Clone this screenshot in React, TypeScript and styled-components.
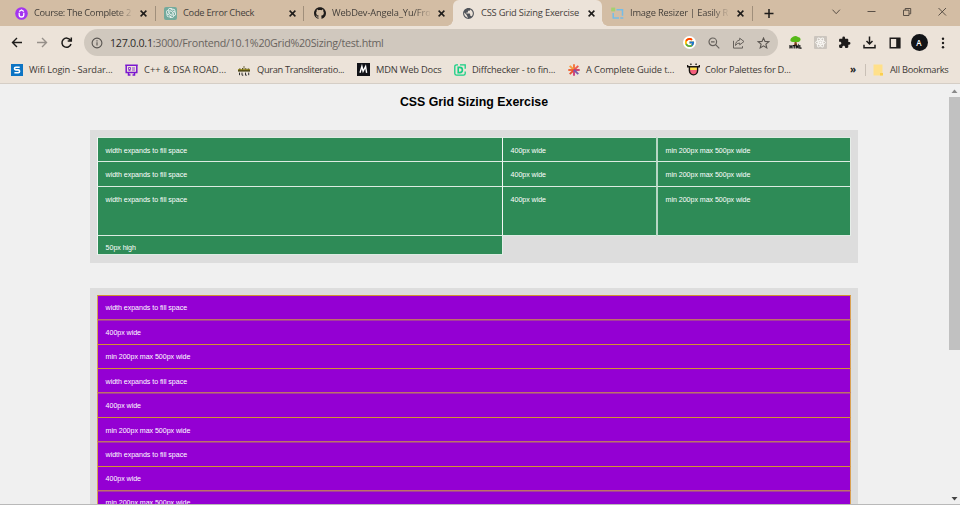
import React from "react";
import styled, { createGlobalStyle } from "styled-components";
import { SiOpenai, SiGithub } from "react-icons/si";
import { FcGoogle } from "react-icons/fc";
import { MdPublic, MdExtension } from "react-icons/md";

const Global = createGlobalStyle`
  * { box-sizing: border-box; }
  html, body { margin: 0; overflow: hidden; }
  body { font-family: "Open Sans", "Noto Sans", sans-serif; }
  svg { display: block; flex: none; }
`;

const Window = styled.div`
  width: 960px;
  height: 505px;
  display: flex;
  flex-direction: column;
  background: #f0f0f0;
  overflow: hidden;
`;

const TabStrip = styled.div`
  height: 26px;
  flex: none;
  display: flex;
  background: #d3bda4;
`;

const Tab = styled.div<{ $w: number; $active?: boolean; $pad: number }>`
  position: relative;
  width: ${(p) => p.$w}px;
  height: 26px;
  flex: none;
  display: flex;
  align-items: center;
  padding-left: ${(p) => p.$pad}px;
  background: ${(p) => (p.$active ? "#ece3d9" : "transparent")};
  border-radius: 6px 6px 0 0;
  &::before,
  &::after {
    content: "";
    display: ${(p) => (p.$active ? "block" : "none")};
    position: absolute;
    bottom: 0;
    width: 6px;
    height: 6px;
  }
  &::before {
    left: -6px;
    background: radial-gradient(circle at 0 0, transparent 5.5px, #ece3d9 6px);
  }
  &::after {
    right: -6px;
    background: radial-gradient(circle at 100% 0, transparent 5.5px, #ece3d9 6px);
  }
`;

const TabTitle = styled.div<{ $ls?: number; $fade?: boolean }>`
  width: 98px;
  margin-left: 6px;
  flex: none;
  font-size: 9.3px;
  line-height: 14px;
  letter-spacing: ${(p) => p.$ls ?? -0.15}px;
  color: #45403b;
  white-space: nowrap;
  mask-image: ${(p) => (p.$fade ? "linear-gradient(90deg, #000 84%, transparent 102%)" : "none")};
`;

const CloseSlot = styled.div<{ $ml: number }>`
  margin-left: ${(p) => p.$ml}px;
`;

const Divider = styled.div<{ $h: number; $ml?: number; $color?: string }>`
  width: 1px;
  height: ${(p) => p.$h}px;
  margin-left: ${(p) => p.$ml ?? 0}px;
  flex: none;
  background: ${(p) => p.$color ?? "#a08f7b"};
`;

const StripControls = styled.div`
  flex: 1;
  display: flex;
  align-items: center;
  padding-left: 11px;
`;

const Toolbar = styled.div`
  height: 32px;
  flex: none;
  display: flex;
  align-items: center;
  padding: 1px 0 0 10px;
  background: #ece3d9;
`;

const Address = styled.div`
  width: 694px;
  height: 27px;
  margin-left: 10px;
  flex: none;
  display: flex;
  align-items: center;
  padding-left: 7px;
  border-radius: 14px;
  background: #d0c8be;
`;

const Url = styled.div`
  width: 573px;
  margin-left: 7px;
  flex: none;
  font-size: 10.7px;
  line-height: 16px;
  letter-spacing: -0.26px;
  color: #69645f;
  white-space: nowrap;
  b {
    font-weight: 400;
    color: #2c2a28;
  }
`;

const AddressIcons = styled.div`
  display: flex;
  align-items: center;
  gap: 12px;
`;

const GoogleBadge = styled.div`
  width: 13px;
  height: 13px;
  display: grid;
  place-items: center;
  border-radius: 50%;
  background: #fff;
`;

const Actions = styled.div`
  display: flex;
  align-items: center;
  margin-left: 11px;
`;

const ActionSlot = styled.div<{ $w: number }>`
  width: ${(p) => p.$w}px;
  display: flex;
  justify-content: center;
  flex: none;
`;

const Avatar = styled.div`
  width: 17px;
  height: 17px;
  border-radius: 50%;
  background: #121417;
  color: #fff;
  font: 600 8px/17px "Open Sans", sans-serif;
  text-align: center;
`;

const Bookmarks = styled.div`
  height: 26px;
  flex: none;
  display: flex;
  align-items: center;
  padding: 0 0 2px 11px;
  background: #ece3d9;
  border-bottom: 1px solid #d5cec6;
`;

const Bookmark = styled.div<{ $w: number; $ls?: number; $gap?: number }>`
  width: ${(p) => p.$w}px;
  flex: none;
  display: flex;
  align-items: center;
  gap: ${(p) => p.$gap ?? 6}px;
  font-size: 9.3px;
  line-height: 14px;
  letter-spacing: ${(p) => p.$ls ?? -0.12}px;
  color: #3d3935;
  white-space: nowrap;
`;

const More = styled.div`
  width: 15px;
  margin-left: 24px;
  flex: none;
  font: 700 10px/12px "Open Sans", sans-serif;
  color: #222;
  padding-bottom: 2px;
`;

const Viewport = styled.div`
  flex: 1;
  min-height: 0;
  display: flex;
  border-bottom: 1px solid #b9b9b9;
`;

const Page = styled.main`
  flex: 1;
  padding: 0 90px;
  overflow: hidden;
  font-family: "Liberation Sans", Arial, sans-serif;
`;

const Heading = styled.h1`
  margin: 0;
  height: 46px;
  padding-top: 10px;
  font-size: 12.35px;
  line-height: 17px;
  font-weight: 700;
  text-align: center;
  color: #000;
`;

const Panel = styled.section<{ $h: number; $mb: number }>`
  height: ${(p) => p.$h}px;
  margin-bottom: ${(p) => p.$mb}px;
  padding: 7px;
  background: #dddddd;
`;

const GreenGrid = styled.div`
  display: grid;
  grid-template-columns: 405px 154px 195px;
  grid-template-rows: 24px 25px 49px 20px;
`;

const PurpleGrid = styled.div`
  display: grid;
  grid-template-columns: 754px;
  grid-template-rows: 24px 25px 24px 24px 25px 24px 25px 24px 25px;
`;

const Cell = styled.div`
  padding: 8px 0 0 7.6px;
  font-size: 7.1px;
  line-height: 9px;
  letter-spacing: -0.05px;
  color: #fff;
  white-space: nowrap;
  overflow: hidden;
`;

const GreenCell = styled(Cell)<{ $wideEdge?: boolean; $end?: boolean; $bottom?: boolean; $last?: boolean }>`
  background: #2e8b57;
  border-top: 1px solid #dcece2;
  border-left: ${(p) => (p.$wideEdge ? "2px solid #b6d6c4" : "1px solid #f4f8f5")};
  border-right: ${(p) => (p.$end ? "1px solid #e6eee9" : "none")};
  border-bottom: ${(p) => (p.$bottom ? "1px solid #dcece2" : "none")};
  margin-bottom: ${(p) => (p.$bottom && !p.$last ? -1 : 0)}px;
  margin-right: ${(p) => (p.$last ? -1 : 0)}px;
  padding-top: ${(p) => (p.$last ? 8 : 9)}px;
`;

const PurpleCell = styled(Cell)<{ $soft?: boolean; $low?: boolean }>`
  background: #9400d3;
  border: solid #d9a052;
  border-width: 1px 1px 0 1px;
  border-top-color: ${(p) => (p.$soft ? "#c07068" : "#d3922f")};
  box-shadow: ${(p) => (p.$soft ? "inset 0 1px 0 #a43e9c" : "none")};
  padding-top: ${(p) => (p.$low ? 9 : 8)}px;
`;

const Scrollbar = styled.div`
  width: 12px;
  flex: none;
  display: flex;
  flex-direction: column;
  align-items: center;
  justify-content: space-between;
  padding: 5px 0 3px;
  background: #f0f0f0;
`;

const Thumb = styled.div`
  width: 11px;
  height: 253px;
  margin: 4px 0 auto 1px;
  background: #c1c1c1;
`;

const Close = () => (
  <svg width="7" height="7" viewBox="0 0 7 7" fill="none" stroke="#1e1c1a" strokeWidth="1.5">
    <path d="M.6.6 6.4 6.4M6.4.6.6 6.4" />
  </svg>
);

const UdemyIcon = () => (
  <svg width="13" height="13" viewBox="0 0 13 13">
    <circle cx="6.5" cy="6.5" r="6.3" fill="#a435f0" />
    <path d="M4.2 5.800v2a2.300 2.200 0 0 0 4.600 0v-2M4.100 4.500 6.500 3l2.400 1.500" fill="none" stroke="#fff" strokeWidth="1.300" />
  </svg>
);

const GptBox = styled.div`
  width: 13px;
  height: 13px;
  display: grid;
  place-items: center;
  border-radius: 2px;
  background: #74aa9c;
  color: #fff;
`;

const ResizerIcon = () => (
  <svg width="13" height="13" viewBox="0 0 13 13" fill="none">
    <path d="M5.500 2.800h6v6M2.200 6v5h5.800" stroke="#74bde8" strokeWidth="1.500" />
    <path d="M9.300 11h3" stroke="#74bde8" strokeWidth="1.500" />
    <path d="M.2.600h4v3.800h-4z" fill="#a5d06f" />
  </svg>
);

const SIcon = () => (
  <svg width="12" height="12" viewBox="0 0 12 12">
    <path d="M0 0h12v12H0z" fill="#0c74c4" />
    <path d="M8.700 3.200H4.800q-1.300 0-1.300 1.300T4.800 5.900h2.400q1.400 0 1.400 1.400T7.200 8.800H3.400" fill="none" stroke="#fff" strokeWidth="1.600" />
  </svg>
);

const BoardIcon = () => (
  <svg width="13" height="12" viewBox="0 0 13 12" fill="none" stroke="#7a17cf" strokeWidth="1.500">
    <path d="M1.200 1.200h10.600v7.300H1.200zM.2 1.200h12.600M3.500 8.500v2.600h2M9.500 8.500v2.600h-2" />
    <path d="M3.500 3.500h2v2h-2zM7 4h3M7 6h3M3.500 6.500h2" strokeWidth=".8" />
  </svg>
);

const QuranIcon = () => (
  <svg width="12" height="12" viewBox="0 0 12 12">
    <path d="M0 5h12v2.200H0z" fill="#a39430" />
    <path d="M1 4.500h1.600v1H1zM4 4h1v1.500H4zM5.600 2h.8v3h-.8zM7.300 4h1v1.500h-1zM9.600 4.500h1.600v1H9.600z" fill="#57511d" />
    <path d="M0 6.900h12" stroke="#35320f" strokeWidth="1.200" />
    <path d="M1.500 8.600v2.600M4 8.600v2.600h1.300M7.500 8.600v2.600h1.300M10.700 8.600v2.600" stroke="#333" strokeWidth="1" fill="none" />
  </svg>
);

const MdnIcon = () => (
  <svg width="13" height="13" viewBox="0 0 13 13">
    <path d="M0 0h13v13H0z" fill="#111217" />
    <path d="M3 9.800 4.900 3.400l1.200 4.800 2.500-4.800 1 6.400" fill="none" stroke="#fff" strokeWidth="1.400" />
  </svg>
);

const DiffIcon = () => (
  <svg width="12" height="12" viewBox="0 0 12 12" fill="none" stroke="#16cf84">
    <path d="M4 .8H2.600Q.8.8.8 2.600v6.800q0 1.800 1.800 1.800h6.800q1.800 0 1.800-1.800V7.600M6 .8h5.200v4" strokeWidth="1.300" />
    <path d="M4.200 3.400h1.600a2.600 2.600 0 0 1 0 5.200H4.200z" strokeWidth="1.600" />
  </svg>
);

const StarburstIcon = () => (
  <svg width="12" height="12" viewBox="0 0 12 12" strokeWidth="1.900" fill="none">
    <path d="M6 6V.3" stroke="#f4743c" />
    <path d="M6 6 1.700 1.900" stroke="#f59b40" />
    <path d="M6 6 10.300 1.900" stroke="#ef5b4c" />
    <path d="M.3 6H6" stroke="#f0622f" />
    <path d="M6 6 1.700 10.100" stroke="#e9522f" />
    <path d="M6 6h5.700" stroke="#cf3f6b" />
    <path d="M6 6v5.700" stroke="#cf3f7b" />
    <path d="m6 6 4.300 4.100" stroke="#7a5cab" />
  </svg>
);

const PaletteBugIcon = () => (
  <svg width="13" height="13" viewBox="0 0 13 13">
    <path d="M2.600 3.400h7.800v4.200a3.900 4.200 0 0 1-7.800 0z" fill="#ffe04d" />
    <path d="M2.600 7h7.800v.8a3.900 3.900 0 0 1-7.800 0z" fill="#f4607c" />
    <path d="M.6 2v1.800h11.800V2M2.400 3.800v3.800a4.100 4.300 0 0 0 8.200 0V3.800M3.500.6l.8 1.200M9.500.6l-.8 1.200" fill="none" stroke="#191512" strokeWidth="1.400" />
  </svg>
);

const TreeIcon = () => (
  <svg width="13" height="13" viewBox="0 0 13 13">
    <path d="M5.700 5.500h1.800l.7 4H5z" fill="#8c4b20" />
    <path d="M4 .8Q6.500-.7 9 .9q2.600.4 2.600 2.400T9.500 6H3.800Q1.200 5.900 1.300 4 1.400 2 4 .8z" fill="#57b918" />
    <path d="M1 9v3.600M3 9v3.600M1 10.800h2M4 9.600h2.400M5.200 9.600v3M7.200 12.600V9.500l1 1.500 1-1.500v3.100M10.800 9v3.100h1.800" fill="none" stroke="#111" strokeWidth="1.200" />
  </svg>
);

const ReactOffIcon = () => (
  <svg width="13" height="13" viewBox="0 0 13 13" fill="none" stroke="#fbf9f6" strokeWidth=".9">
    <rect width="13" height="13" rx="1" fill="#cbc5be" stroke="none" />
    <ellipse cx="6.500" cy="6.500" rx="5" ry="2" />
    <ellipse cx="6.500" cy="6.500" rx="5" ry="2" transform="rotate(60 6.500 6.500)" />
    <ellipse cx="6.500" cy="6.500" rx="5" ry="2" transform="rotate(120 6.500 6.500)" />
    <circle cx="6.500" cy="6.500" r=".8" fill="#fff" />
  </svg>
);

const labels = ["width expands to fill space", "400px wide", "min 200px max 500px wide"];
const softRows = [1, 4, 6, 8];
const lowRows = [1, 3, 4, 5, 6];

export default function App() {
  return (
    <Window>
      <Global />
      <TabStrip>
        <Tab $w={155} $pad={15}>
          <UdemyIcon />
          <TabTitle $ls={-0.3} $fade>Course: The Complete 2</TabTitle>
          <CloseSlot $ml={8}><Close /></CloseSlot>
          <Divider $h={15} $ml={8} />
        </Tab>
        <Tab $w={150} $pad={9}>
          <GptBox><SiOpenai size={10} /></GptBox>
          <TabTitle $ls={-0.27}>Code Error Check</TabTitle>
          <CloseSlot $ml={8}><Close /></CloseSlot>
          <Divider $h={15} $ml={7} />
        </Tab>
        <Tab $w={148} $pad={9}>
          <SiGithub size={12} color="#1d1b1a" />
          <TabTitle $ls={-0.12} $fade>WebDev-Angela_Yu/Fro</TabTitle>
          <CloseSlot $ml={8}><Close /></CloseSlot>
        </Tab>
        <Tab $w={149} $pad={9} $active>
          <MdPublic size={13} color="#50545a" />
          <TabTitle $ls={-0.18}>CSS Grid Sizing Exercise</TabTitle>
          <CloseSlot $ml={9}><Close /></CloseSlot>
        </Tab>
        <Tab $w={151} $pad={9}>
          <ResizerIcon />
          <TabTitle $ls={-0.18} $fade>Image Resizer | Easily Re</TabTitle>
          <CloseSlot $ml={9}><Close /></CloseSlot>
          <Divider $h={15} $ml={8} />
        </Tab>
        <StripControls>
          <svg width="195" height="14" viewBox="0 0 195 14" fill="none" stroke="#4c443c">
            <path d="M.500 7.500h9M5 3v9" stroke="#1e1c1a" strokeWidth="1.500" />
            <path d="m68.500 3.700 3.700 4 3.700-4M103.500 5.500h8" strokeWidth=".9" />
            <path d="M139.500 4.200h5.500v5.300h-5.500zM141.200 4V2.500h5.500v5.300h-1.500" strokeWidth=".9" />
            <path d="m174.500 2 7.500 7.500m0-7.500-7.500 7.500" strokeWidth=".9" />
          </svg>
        </StripControls>
      </TabStrip>
      <Toolbar>
        <svg width="64" height="14" viewBox="0 0 64 14" fill="none" strokeWidth="1.400">
          <path d="M12 6.500H2.700M7 2 2.500 6.500 7 11" stroke="#1e1c1a" />
          <path d="M27 6.500h9.300M32 2l4.500 4.500L32 11" stroke="#96908a" />
          <path d="M60.500 4.300A4.600 4.600 0 1 0 61 8M61.300 1.500v3.400h-3.600" stroke="#1e1c1a" strokeWidth="1.500" />
        </svg>
        <Address>
          <svg width="12" height="12" viewBox="0 0 12 12" fill="none" stroke="#57534f" strokeWidth="1.100">
            <circle cx="6" cy="6" r="4.900" />
            <path d="M6 5.300v3.300M6 3.300v1.200" />
          </svg>
          <Url><b>127.0.0.1</b>:3000/Frontend/10.1%20Grid%20Sizing/test.html</Url>
          <AddressIcons>
            <GoogleBadge><FcGoogle size={11} /></GoogleBadge>
            <svg width="12" height="12" viewBox="0 0 12 12" fill="none" stroke="#66615c" strokeWidth="1.200">
              <circle cx="4.800" cy="4.800" r="3.800" />
              <path d="m7.600 7.600 3.700 3.700M3 4.800h3.600" />
            </svg>
            <svg width="13" height="12" viewBox="0 0 13 12" fill="none" stroke="#66615c" strokeWidth="1">
              <path d="M1.500 3.800v7.300h9V9.200" />
              <path d="M7.700 1.200 12 4.500 7.700 7.800V6Q5 6 3.500 8.500 3.700 3.600 7.700 3.100z" />
            </svg>
            <svg width="13" height="12" viewBox="0 0 13 12" fill="none" stroke="#5b5651" strokeWidth="1.100">
              <path d="m6.500 1 1.500 3.400 3.800.3-2.900 2.500.9 3.700-3.300-2-3.300 2 .9-3.700L1.200 4.700 5 4.400z" />
            </svg>
          </AddressIcons>
        </Address>
        <Actions>
          <ActionSlot $w={13}><TreeIcon /></ActionSlot>
          <ActionSlot $w={36}><ReactOffIcon /></ActionSlot>
          <ActionSlot $w={13}><MdExtension size={13} color="#1d1b1a" /></ActionSlot>
          <ActionSlot $w={37}>
            <svg width="13" height="13" viewBox="0 0 13 13" fill="none" stroke="#1d1b1a" strokeWidth="1.500">
              <path d="M6.500.5v7.500M3.500 5l3 3 3-3M1 8.700v3.100h11V8.700" />
            </svg>
          </ActionSlot>
          <ActionSlot $w={13}>
            <svg width="12" height="12" viewBox="0 0 12 12">
              <path d="M1.200 1.200h9.600v9.600H1.200z" fill="none" stroke="#1d1b1a" strokeWidth="1.400" />
              <path d="M7.200 1h4v10h-4z" fill="#1d1b1a" />
            </svg>
          </ActionSlot>
          <ActionSlot $w={36}><Avatar>A</Avatar></ActionSlot>
          <ActionSlot $w={12}>
            <svg width="4" height="12" viewBox="0 0 4 12" fill="#1d1b1a">
              <circle cx="2" cy="1.800" r="1.200" />
              <circle cx="2" cy="6" r="1.200" />
              <circle cx="2" cy="10.200" r="1.200" />
            </svg>
          </ActionSlot>
        </Actions>
      </Toolbar>
      <Bookmarks>
        <Bookmark $w={114}><SIcon />Wifi Login - Sardar...</Bookmark>
        <Bookmark $w={113} $ls={0.06}><BoardIcon />C++ &amp; DSA ROAD...</Bookmark>
        <Bookmark $w={119} $ls={-0.34} $gap={7}><QuranIcon />Quran Transliteratio...</Bookmark>
        <Bookmark $w={97} $ls={-0.18}><MdnIcon />MDN Web Docs</Bookmark>
        <Bookmark $w={114} $ls={-0.15}><DiffIcon />Diffchecker - to fin...</Bookmark>
        <Bookmark $w={119} $ls={-0.15}><StarburstIcon />A Complete Guide t...</Bookmark>
        <Bookmark $w={139} $ls={-0.26} $gap={5}><PaletteBugIcon />Color Palettes for D...</Bookmark>
        <More>»</More>
        <Divider $h={12} $color="#c9c0b6" />
        <Bookmark $w={84} $gap={7} $ls={-0.27}>
          <svg width="17" height="12" viewBox="0 0 17 12">
            <path d="M7.500.5h9v11h-9z" fill="#ffe08a" />
            <path d="M14 9h3v2.500h-3z" fill="#fbcf4e" />
          </svg>
          All Bookmarks
        </Bookmark>
      </Bookmarks>
      <Viewport>
        <Page>
          <Heading>CSS Grid Sizing Exercise</Heading>
          <Panel $h={133} $mb={25}>
            <GreenGrid>
              {[0, 1, 2].map((row) =>
                labels.map((label, col) => (
                  <GreenCell key={row + label} $wideEdge={col === 2} $end={col === 2} $bottom={row === 2 && col > 0}>
                    {label}
                  </GreenCell>
                ))
              )}
              <GreenCell $end $bottom $last>50px high</GreenCell>
            </GreenGrid>
          </Panel>
          <Panel $h={300} $mb={0}>
            <PurpleGrid>
              {[0, 1, 2, 3, 4, 5, 6, 7, 8].map((row) => (
                <PurpleCell key={row} $soft={softRows.includes(row)} $low={lowRows.includes(row)}>
                  {labels[row % 3]}
                </PurpleCell>
              ))}
            </PurpleGrid>
          </Panel>
        </Page>
        <Scrollbar>
          <svg width="7" height="4" viewBox="0 0 7 4"><path d="M.5 4 3.500.5 6.500 4z" fill="#8a8a8a" /></svg>
          <Thumb />
          <svg width="7" height="4" viewBox="0 0 7 4"><path d="M.5 0h6L3.500 3.500z" fill="#444" /></svg>
        </Scrollbar>
      </Viewport>
    </Window>
  );
}
